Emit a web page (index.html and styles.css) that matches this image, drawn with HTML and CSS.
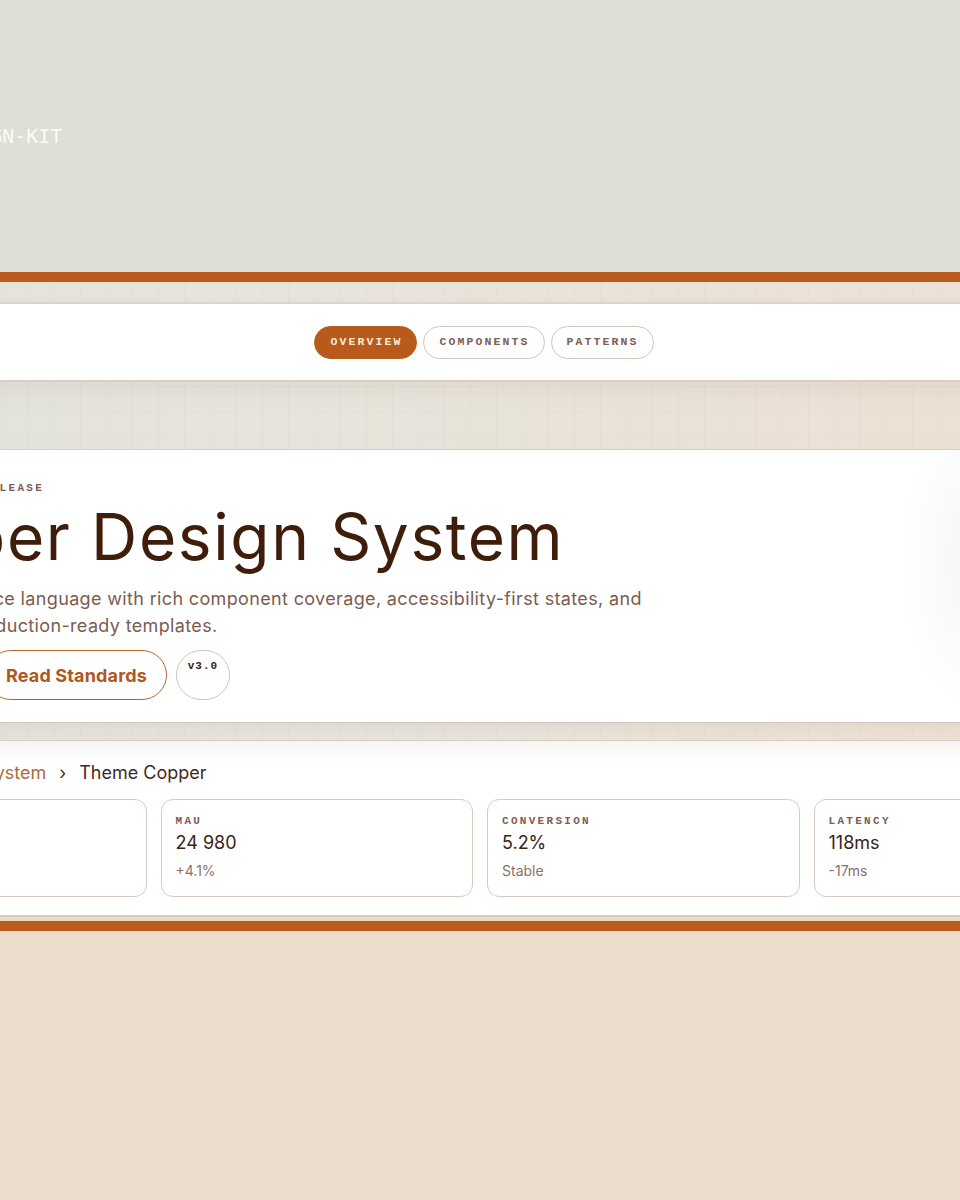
FILE: index.html
```html
<!DOCTYPE html>
<html lang="en">
<head>
<meta charset="utf-8">
<title>Copper Design System</title>
<link rel="stylesheet" href="styles.css">
</head>
<body>
<div class="page">
  <header class="top">
    <div class="brand">DESIGN-KIT</div>
  </header>
  <div class="rule"></div>
  <main class="middle">
    <nav class="nav">
      <a class="pill active">OVERVIEW</a>
      <a class="pill">COMPONENTS</a>
      <a class="pill">PATTERNS</a>
    </nav>
    <section class="hero">
      <div class="eyebrow">• RELEASE</div>
      <h1 class="title">Copper Design System</h1>
      <p class="lede">Voice language with rich component coverage, accessibility-first states, and production-ready templates.</p>
      <div class="actions">
        <a class="btn-outline">Read Standards</a>
        <span class="chip">v3.0</span>
      </div>
    </section>
    <section class="stats">
      <div class="crumbs">
        <a class="crumb-link">Design System</a>
        <span class="sep">›</span>
        <span class="crumb-current">Theme Copper</span>
      </div>
      <div class="grid">
        <div class="card">
          <div class="label">USERS</div>
          <div class="value">1 204</div>
          <div class="delta">+2%</div>
        </div>
        <div class="card">
          <div class="label">MAU</div>
          <div class="value">24 980</div>
          <div class="delta">+4.1%</div>
        </div>
        <div class="card">
          <div class="label">CONVERSION</div>
          <div class="value">5.2%</div>
          <div class="delta">Stable</div>
        </div>
        <div class="card">
          <div class="label">LATENCY</div>
          <div class="value">118ms</div>
          <div class="delta">-17ms</div>
        </div>
      </div>
    </section>
  </main>
  <div class="rule rule-bottom"></div>
  <footer class="bottom"></footer>
</div>
</body>
</html>
```
FILE: styles.css
```css
html, body {
  margin: 0;
  padding: 0;
}
body {
  display: flex;
  justify-content: center;
  overflow: hidden;
  min-height: 1200px;
  background: #ecdccb;
  font-family: Inter, "Liberation Sans", sans-serif;
}
.page {
  width: 1320px;
  flex: none;
  display: flex;
  flex-direction: column;
}
.top {
  height: 272px;
  background: #dfdfd6;
  display: flex;
  align-items: center;
  padding-left: 122px;
}
.brand {
  font-family: "DejaVu Sans Mono", monospace;
  font-size: 20px;
  color: #fbfbf4;
}
.rule {
  height: 10px;
  background: #b95c1d;
  box-shadow: 0 2px 0 #f3e0cc;
}
.middle {
  background-color: #e6e3da;
  background-image:
    linear-gradient(rgba(170, 150, 130, 0.05) 1px, transparent 1px),
    linear-gradient(90deg, rgba(170, 150, 130, 0.05) 1px, transparent 1px),
    linear-gradient(90deg, #e3e3da 0%, #e7e4db 40%, #efe0d3 100%);
  background-size: 26px 26px, 26px 26px, 100% 100%;
  padding: 20px 0 0;
  display: flex;
  flex-direction: column;
}
.nav {
  background: #fff;
  border-top: 2px solid #dcd3cc;
  border-bottom: 2px solid #d9cfc8;
  height: 76px;
  display: flex;
  align-items: center;
  justify-content: center;
  gap: 6px;
  padding-left: 8px;
  box-shadow: 0 10px 18px rgba(120, 100, 80, 0.07);
}
.pill {
  height: 33px;
  box-sizing: border-box;
  border: 1px solid #d3c3b9;
  border-radius: 17px;
  padding: 0 14px 1px 15px;
  display: flex;
  align-items: center;
  font-family: "Liberation Mono", monospace;
  font-weight: bold;
  font-size: 11.5px;
  letter-spacing: 2.1px;
  color: #7a5e55;
  background: #fff;
}
.pill.active {
  background: #b85a1c;
  border-color: #b85a1c;
  color: #f8ead8;
}
.hero {
  margin-top: 67px;
  background:
    radial-gradient(ellipse 80px 160px at 1160px 110px, rgba(225, 232, 238, 0.45), rgba(255, 255, 255, 0) 100%),
    #fff;
  border-top: 1px solid #dccbc0;
  border-bottom: 1px solid #d6c8be;
  padding: 30px 0 22px 146px;
  box-shadow: 0 8px 16px rgba(120, 100, 80, 0.06);
}
.eyebrow {
  margin-left: -2px;
  font-family: "Liberation Mono", monospace;
  font-weight: bold;
  font-size: 11px;
  letter-spacing: 2.3px;
  line-height: 16px;
  color: #7d5d52;
}
.title {
  margin: 2px 0 0 -129px;
  font-size: 64px;
  font-weight: 400;
  line-height: 78px;
  letter-spacing: 1.6px;
  color: #3f1d0b;
}
.lede {
  margin: 9px 0 0;
  width: 700px;
  font-size: 18px;
  line-height: 27px;
  letter-spacing: 0.35px;
  color: #7b5c50;
}
.actions {
  margin: 11px 0 0 20px;
  display: flex;
  gap: 9px;
  align-items: stretch;
}
.btn-outline {
  height: 50px;
  box-sizing: border-box;
  border: 1.5px solid #b8662c;
  border-radius: 25px;
  padding: 0 19px;
  display: flex;
  align-items: center;
  font-weight: 700;
  font-size: 18px;
  letter-spacing: 0.15px;
  color: #b0581c;
}
.chip {
  width: 54px;
  height: 50px;
  box-sizing: border-box;
  border: 1px solid #d3c3b9;
  border-radius: 27px;
  padding-top: 9px;
  text-align: center;
  font-family: "Liberation Mono", monospace;
  font-weight: bold;
  font-size: 11px;
  letter-spacing: 1px;
  color: #3b2318;
}
.stats {
  margin-top: 17px;
  background: linear-gradient(#f6f5f3 0px, #fff 22px);
  border-top: 1px solid #d8ccc4;
  border-bottom: 2px solid #d6cdc6;
  padding: 20px 14px 18px;
}
.crumbs {
  display: flex;
  align-items: center;
  gap: 13px;
  font-size: 18px;
  line-height: 24px;
  padding-left: 85px;
}
.crumb-link {
  color: #b06a3c;
}
.sep {
  color: #4a3024;
}
.crumb-current {
  color: #3f2a1f;
}
.grid {
  margin-top: 14px;
  display: grid;
  grid-template-columns: repeat(4, 1fr);
  gap: 14px;
}
.card {
  height: 98px;
  box-sizing: border-box;
  border: 1px solid #d9c9bf;
  border-radius: 12px;
  padding: 14px 14px;
  background: #fff;
}
.label {
  font-family: "Liberation Mono", monospace;
  font-weight: bold;
  font-size: 11px;
  letter-spacing: 2.3px;
  line-height: 14px;
  color: #7d5d52;
}
.value {
  margin-top: 2px;
  font-size: 18px;
  line-height: 26px;
  color: #3b2318;
}
.delta {
  margin-top: 6px;
  font-size: 14px;
  line-height: 18px;
  color: #8a7068;
}
.rule-bottom {
  margin-top: 4px;
  box-shadow: 0 -2px 0 #f3d8c0, 0 2px 0 #f1dccb;
}
.bottom {
  flex: 1;
  background: #ecdccb;
}
```
